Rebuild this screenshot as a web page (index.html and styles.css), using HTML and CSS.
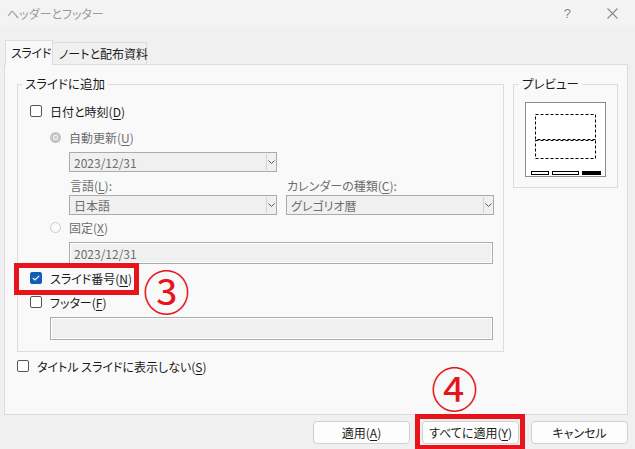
FILE: index.html
```html
<!DOCTYPE html>
<html lang="ja">
<head>
<meta charset="utf-8">
<title>ヘッダーとフッター</title>
<link rel="stylesheet" href="styles.css">
</head>
<body>
<div class="window">
  <div class="titlebar">
    <span class="title">ヘッダーとフッター</span>
    <span class="help">?</span>
    <svg class="close" width="11" height="11" viewBox="0 0 11 11"><path d="M0.5 0.5 L10.5 10.5 M10.5 0.5 L0.5 10.5" stroke="#8a8a8a" stroke-width="1.1" fill="none"/></svg>
  </div>
  <div class="tabs">
    <div class="tab active">スライド</div>
    <div class="tab">ノートと配布資料</div>
  </div>
  <div class="panel">
    <div class="groups">
      <fieldset class="group main">
        <legend>スライドに追加</legend>
        <div class="row cb-row r1"><span class="cb"></span><span>日付と時刻(<u>D</u>)</span></div>
        <div class="row radio-row r2"><span class="radio on"></span><span class="dim">自動更新(<u>U</u>)</span></div>
        <div class="combo c1"><span>2023/12/31</span><span class="arrow"><svg width="7" height="4" viewBox="0 0 7 4"><path d="M0.5 0.5 L3.5 3.5 L6.5 0.5" stroke="#5a5a5a" fill="none"/></svg></span></div>
        <div class="labels"><span class="dim">言語(<u>L</u>):</span><span class="dim">カレンダーの種類(<u>C</u>):</span></div>
        <div class="combos">
          <div class="combo"><span>日本語</span><span class="arrow"><svg width="7" height="4" viewBox="0 0 7 4"><path d="M0.5 0.5 L3.5 3.5 L6.5 0.5" stroke="#5a5a5a" fill="none"/></svg></span></div>
          <div class="combo"><span>グレゴリオ暦</span><span class="arrow"><svg width="7" height="4" viewBox="0 0 7 4"><path d="M0.5 0.5 L3.5 3.5 L6.5 0.5" stroke="#5a5a5a" fill="none"/></svg></span></div>
        </div>
        <div class="row radio-row r6"><span class="radio"></span><span class="dim">固定(<u>X</u>)</span></div>
        <div class="textbox t1">2023/12/31</div>
        <div class="row cb-row r8"><span class="cb checked"><svg width="8" height="6" viewBox="0 0 8 6"><path d="M0.8 3 L3 5 L7.2 0.8" stroke="#fff" stroke-width="1.1" fill="none"/></svg></span><span>スライド番号(<u>N</u>)</span></div>
        <div class="row cb-row r9"><span class="cb"></span><span>フッター(<u>F</u>)</span></div>
        <div class="textbox t2"></div>
      </fieldset>
      <fieldset class="group preview">
        <legend>プレビュー</legend>
        <svg class="thumb" width="81" height="75" viewBox="0 0 81 75">
          <rect x="0.5" y="0.5" width="80" height="74" fill="#fff" stroke="#8c8c8c"/>
          <rect x="10.5" y="12.5" width="60" height="25" fill="none" stroke="#000" stroke-dasharray="3 2"/>
          <rect x="10.5" y="38.5" width="60" height="18" fill="none" stroke="#000" stroke-dasharray="3 2"/>
          <rect x="6.5" y="69.5" width="17" height="3" fill="#fff" stroke="#000"/>
          <rect x="27.5" y="69.5" width="26" height="3" fill="#fff" stroke="#000"/>
          <rect x="57" y="69" width="19" height="4" fill="#000"/>
        </svg>
      </fieldset>
    </div>
    <div class="row cb-row title-row"><span class="cb"></span><span>タイトル スライドに表示しない(<u>S</u>)</span></div>
  </div>
  <div class="buttons">
    <button class="btn">適用(<u>A</u>)</button>
    <button class="btn">すべてに適用(<u>Y</u>)</button>
    <button class="btn">キャンセル</button>
  </div>
  <div class="mark box3"></div>
  <div class="mark num num3">③</div>
  <div class="mark box4"></div>
  <div class="mark num num4">④</div>
</div>
</body>
</html>
```
FILE: styles.css
```css
* { box-sizing: border-box; }
html, body { margin: 0; padding: 0; }
body {
  width: 635px;
  height: 449px;
  overflow: hidden;
  background: #f0f0f0;
  font-family: "Noto Sans CJK JP", "Noto Sans", sans-serif;
  font-size: 12px;
  font-feature-settings: "palt";
  color: #1b1b1b;
}
.window { position: relative; width: 635px; height: 449px; }
u { text-decoration: underline; text-underline-offset: 2px; }

.titlebar {
  height: 27px;
  background: #f3f3f3;
  display: flex;
  align-items: center;
  padding-left: 7px;
}
.title { color: #9b9b9b; flex: 1; }
.help { color: #8a8a8a; font-family: "Liberation Sans", sans-serif; font-size: 13px; margin-right: 36px; }
.close { margin-right: 17px; }

.tabs {
  display: flex;
  align-items: flex-end;
  padding-left: 5px;
  margin-top: 13px;
  margin-bottom: -1px;
  position: relative;
  z-index: 1;
  height: 25px;
}
.tab {
  height: 23px;
  border: 1px solid #dcdcdc;
  border-left: none;
  background: #f0f0f0;
  display: flex;
  align-items: center;
  padding: 0 0 0 6px;
  width: 94px;
  white-space: nowrap;
}
.tab.active {
  height: 25px;
  width: 48px;
  border-left: 1px solid #dcdcdc;
  border-bottom: none;
  background: #f9f9f9;
  padding: 0 0 2px 5px;
  letter-spacing: -0.3px;
}

.panel {
  margin-left: 4px;
  width: 624px;
  height: 351px;
  border: 1px solid #dcdcdc;
  background: #f9f9f9;
  padding: 11px 9px 0 12px;
}
.groups { display: flex; align-items: flex-start; gap: 9px; }
.group {
  margin: 0;
  padding: 0;
  min-width: 0;
  border: 1px solid #dcdcdc;
}
.group legend { line-height: 16px; padding: 0 3px; font-size: 12.5px; }
.main { width: 487px; padding-bottom: 11px; }
.main legend { margin-left: 4px; }
.preview { width: 105px; height: 112px; }
.preview legend { margin-left: 5px; }
.thumb { display: block; margin: 10px 0 0 11px; }

.row { display: flex; align-items: center; height: 20px; white-space: nowrap; }
.cb-row { padding-left: 12px; gap: 8px; }
.radio-row { padding-left: 32px; gap: 8px; }
.r1 { margin-top: 9px; }
.r2 { margin-top: 6px; }
.r6 { margin-top: 2px; }
.r8 { margin-top: 4px; }
.r9 { margin-top: 4px; }
.dim { color: #6d6d6d; }

.cb {
  width: 12px; height: 12px;
  border: 1px solid #555;
  border-radius: 2px;
  background: #fff;
  display: flex; align-items: center; justify-content: center;
  flex: none;
}
.cb.checked { background: #0f5fb4; border-color: #0f5fb4; }
.radio {
  width: 11px; height: 11px; border-radius: 50%;
  border: 1px solid #cccccc;
  background: #fbfbfb;
  flex: none;
}
.radio.on {
  border: none;
  background: radial-gradient(circle, #cfcfcf 0 1.5px, #f4f4f4 2px 2.5px, #c4c4c4 3px);
}

.combo {
  height: 20px;
  width: 208px;
  border: 1px solid #ababae;
  background: #f0f0f0;
  color: #6d6d6d;
  display: flex;
  align-items: center;
  justify-content: space-between;
  padding-left: 4px;
}
.combo .arrow {
  height: 16px;
  width: 10px;
  border-left: 1px solid #d4d4d4;
  display: flex; align-items: center; justify-content: flex-end;
  padding-right: 1px;
}
.combo .arrow svg { display: block; }
.c1 { margin: 5px 0 0 51px; }
.labels {
  display: grid;
  grid-template-columns: 208px 208px;
  column-gap: 9px;
  margin: 4px 0 0 52px;
  height: 18px;
  align-items: center;
}
.combos {
  display: flex;
  gap: 9px;
  margin: 1px 0 0 51px;
}
.textbox {
  height: 22px;
  border: 1px solid #ababae;
  box-shadow: inset 0 0 0 1px #ffffff;
  background: #f0f0f0;
  color: #6d6d6d;
  display: flex;
  align-items: center;
  padding-left: 4px;
}
.t1 { margin: 5px 0 0 51px; width: 424px; }
.t2 { margin: 5px 0 0 32px; width: 443px; height: 23px; }
.title-row { margin-top: 4px; padding-left: 0; }

.buttons {
  display: flex;
  justify-content: flex-end;
  gap: 12px;
  padding-right: 7px;
  margin-top: 6px;
}
.btn {
  width: 97px;
  height: 23px;
  background: #fdfdfd;
  border: 1px solid #d0d0d0;
  border-radius: 4px;
  font: inherit;
  color: #1b1b1b;
  padding: 0;
}

.mark { position: absolute; }
.box3 { left: 14px; top: 263px; width: 125px; height: 32px; border: 5px solid #e8141c; }
.box4 { left: 415px; top: 414px; width: 110px; height: 36px; border: 5px solid #e8141c; }
.num {
  color: #e8141c;
  font-size: 47px;
  line-height: 47px;
  font-feature-settings: normal;
}
.num3 { left: 143px; top: 266px; }
.num4 { left: 431px; top: 363px; }
```
